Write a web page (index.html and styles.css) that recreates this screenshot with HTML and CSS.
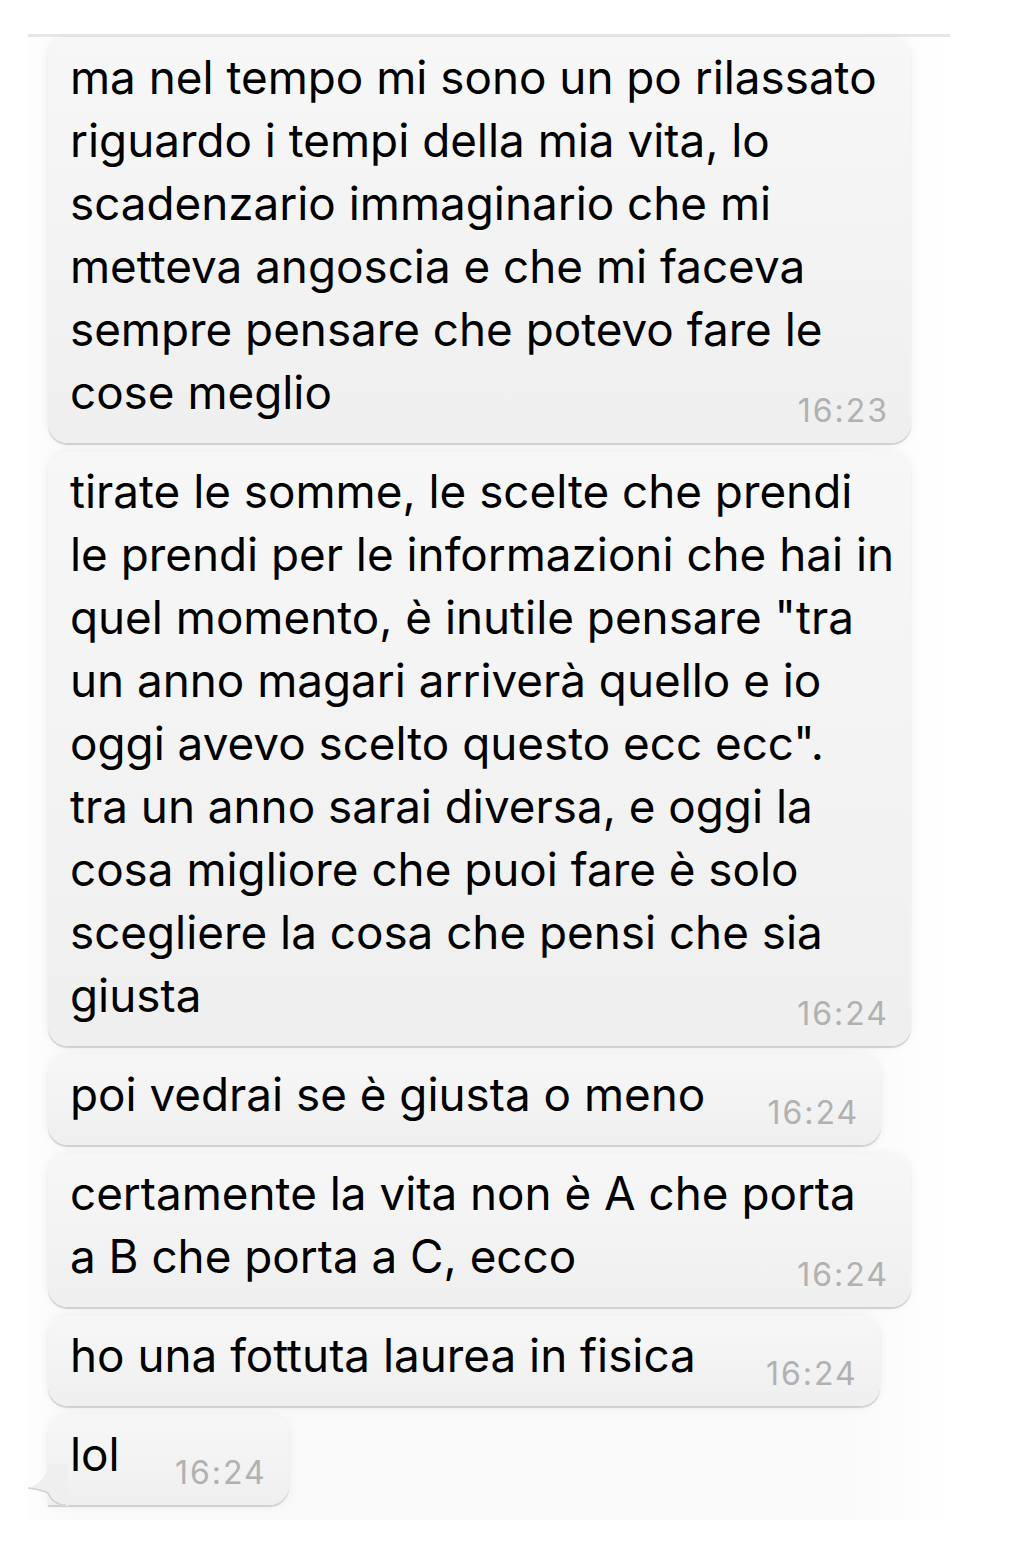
FILE: index.html
```html
<!DOCTYPE html>
<html lang="it">
<head>
    <meta charset="UTF-8">
    <meta name="viewport" content="width=device-width, initial-scale=1.0">
    <title>Chat</title>
    <link rel="stylesheet" href="styles.css">
</head>
<body>
    <div class="chat">
        <div class="bubble full">
            <span class="text">ma nel tempo mi sono un po rilassato<br>riguardo i tempi della mia vita, lo<br>scadenzario immaginario che mi<br>metteva angoscia e che mi faceva<br>sempre pensare che potevo fare le<br>cose meglio</span><span class="spacer"></span>
            <span class="time">16:23</span>
        </div>
        <div class="bubble full">
            <span class="text">tirate le somme, le scelte che prendi<br>le prendi per le informazioni che hai in<br>quel momento, è inutile pensare "tra<br>un anno magari arriverà quello e io<br>oggi avevo scelto questo ecc ecc".<br>tra un anno sarai diversa, e oggi la<br>cosa migliore che puoi fare è solo<br>scegliere la cosa che pensi che sia<br>giusta</span><span class="spacer"></span>
            <span class="time">16:24</span>
        </div>
        <div class="bubble">
            <span class="text">poi vedrai se è giusta o meno</span><span class="spacer"></span>
            <span class="time">16:24</span>
        </div>
        <div class="bubble full">
            <span class="text">certamente la vita non è A che porta<br>a B che porta a C, ecco</span><span class="spacer"></span>
            <span class="time">16:24</span>
        </div>
        <div class="bubble">
            <span class="text">ho una fottuta laurea in fisica</span><span class="spacer wide"></span>
            <span class="time">16:24</span>
        </div>
        <div class="bubble last">
            <span class="text">lol</span><span class="spacer short"></span>
            <span class="time">16:24</span>
            <svg class="tail" width="40" height="42" viewBox="0 0 40 42">
                <path d="M20 0 C20 12 11 21 0 24 C8 25 15 26 20 29 C23 36 28 42 38 42 L40 42 L40 0 Z" fill="#efefef"/>
                <path d="M0 24 C8 25 15 26 20 29 C23 36 28 41 38 41" fill="none" stroke="#d2d2d2" stroke-width="1.5"/>
            </svg>
        </div>
    </div>
</body>
</html>
```

FILE: styles.css
```css
body {
    margin: 0;
    background: #fff;
    font-family: Inter, "Liberation Sans", sans-serif;
}
.chat {
    margin: 34px 0 0 28px;
    width: 922px;
    padding: 1px 0 15px 20px;
    box-sizing: border-box;
    border-top: 3px solid #e6e6e6;
    background: linear-gradient(to right, #fdfdfd, #f9f9f9 6%, #f9f9f9 88%, #fff);
    display: flex;
    flex-direction: column;
    align-items: flex-start;
    gap: 9px;
}
.bubble {
    position: relative;
    box-sizing: border-box;
    padding: 8px 22px 19px 22px;
    border-radius: 20px;
    background: linear-gradient(#f7f7f7, #efefef);
    box-shadow: 0 2px 1px -0.5px #d0d0d0, 0 0 10px rgba(0, 0, 0, 0.06);
    font-size: 45.8px;
    line-height: 63px;
    color: #000;
    white-space: nowrap;
}
.full {
    width: 863px;
}
.spacer {
    display: inline-block;
    width: 154px;
}
.spacer.wide {
    width: 162px;
}
.spacer.short {
    width: 147px;
}
.time {
    position: absolute;
    right: 22px;
    bottom: 17px;
    font-size: 32px;
    line-height: 30px;
    color: #b1b1b1;
    letter-spacing: 2px;
}
.last {
    border-bottom-left-radius: 0;
}
.tail {
    position: absolute;
    left: -20px;
    bottom: -1px;
}
```
